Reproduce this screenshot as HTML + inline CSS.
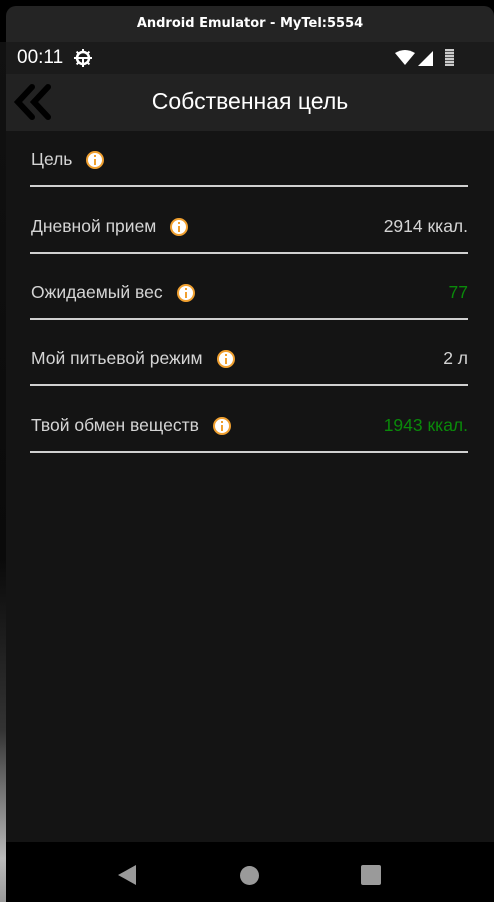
<!DOCTYPE html>
<html><head><meta charset="utf-8"><style>
*{margin:0;padding:0;box-sizing:border-box}
body{width:494px;height:902px;background:#000;position:relative;overflow:hidden;font-family:"Liberation Sans","DejaVu Sans",sans-serif}
.title{position:absolute;left:6px;top:6px;width:488px;height:36px;background:#242424;border-radius:10px 10px 0 0;color:#fff;font:bold 13px "DejaVu Sans",sans-serif;text-align:center;line-height:36px}
.status{position:absolute;left:6px;top:42px;width:488px;height:32px;background:#1b1b1b;color:#fff}
.appbar{position:absolute;left:6px;top:74px;width:488px;height:57px;background:#222}
.content{position:absolute;left:6px;top:131px;width:488px;height:711px;background:#141414}
.nav{position:absolute;left:6px;top:842px;width:488px;height:60px;background:#000}
.leftbg{position:absolute;left:0;top:42px;width:6px;height:860px;background:linear-gradient(#111 0%,#0a0a0a 60%,#333 80%,#bbb 95%,#999 100%)}
.row{position:absolute;left:24px;width:438px;height:66px;border-bottom:2px solid #d0d0d0}
.lbl{position:absolute;left:1px;bottom:15px;color:#d4d4d4;font-size:17.5px;display:flex;align-items:center}
.ic{display:inline-block;width:18px;height:18px;border-radius:50%;background:#fff;border:2px solid #f0a030;margin-left:14px;position:relative}
.ic:before{content:"";position:absolute;left:6px;top:2px;width:2px;height:2px;background:#f0a030}
.ic:after{content:"";position:absolute;left:6px;top:6px;width:2px;height:6px;background:#f0a030}
.val{position:absolute;right:0;bottom:15px;font-size:17.5px;color:#d4d4d4}
.g{color:#0a8a0a}
</style></head><body>
<div class="title">Android Emulator - MyTel:5554</div>
<div class="leftbg"></div>
<div class="status">
<span style="position:absolute;left:11px;top:5px;font-size:19px">00:11</span>
<svg style="position:absolute;left:67px;top:6px" width="20" height="20" viewBox="0 0 20 20"><circle cx="10" cy="10" r="6" fill="none" stroke="#fff" stroke-width="2.5"/><path d="M10 1v4M10 15v4M1 10h4M15 10h4M3.6 3.6l2.8 2.8M13.6 13.6l2.8 2.8M3.6 16.4l2.8-2.8M13.6 6.4l2.8-2.8M4 10h12M10 10v6" stroke="#fff" stroke-width="2"/></svg>
<svg style="position:absolute;left:389px;top:8px" width="22" height="16" viewBox="0 0 22 16"><path d="M0 3Q10-3 20 3L10 15Z" fill="#fff"/></svg>
<svg style="position:absolute;left:412px;top:8px" width="16" height="16"><path d="M0 16L15 1V16Z" fill="#fff"/></svg>
<div style="position:absolute;left:439px;top:7px;width:9px;height:17px;background:repeating-linear-gradient(#ccc 0 2px,#555 2px 3px)"></div>
</div>
<div class="appbar">
<svg style="position:absolute;left:6px;top:10px" width="40" height="36" viewBox="0 0 40 36"><path d="M20 3L6 18l14 15M36 3L22 18l14 15" fill="none" stroke="#000" stroke-width="6" stroke-linecap="round"/></svg>
<div style="position:absolute;left:0;width:488px;top:14px;text-align:center;color:#fff;font-size:23px">Собственная цель</div>
</div>
<div class="content">
<div class="row" style="top:-10px"><div class="lbl">Цель<span class="ic"></span></div></div>
<div class="row" style="top:57px"><div class="lbl">Дневной прием<span class="ic"></span></div><div class="val">2914 ккал.</div></div>
<div class="row" style="top:123px"><div class="lbl">Ожидаемый вес<span class="ic"></span></div><div class="val g">77</div></div>
<div class="row" style="top:189px"><div class="lbl">Мой питьевой режим<span class="ic"></span></div><div class="val">2 л</div></div>
<div class="row" style="top:256px"><div class="lbl">Твой обмен веществ<span class="ic"></span></div><div class="val g">1943 ккал.</div></div>
</div>
<div class="nav">
<svg style="position:absolute;left:111px;top:22px" width="20" height="22"><path d="M19 1L1 11l18 10Z" fill="#9a9a9a"/></svg>
<div style="position:absolute;left:234px;top:24px;width:19px;height:19px;border-radius:50%;background:#9a9a9a"></div>
<div style="position:absolute;left:355px;top:23px;width:20px;height:20px;border-radius:2px;background:#9a9a9a"></div>
</div>
</body></html>
